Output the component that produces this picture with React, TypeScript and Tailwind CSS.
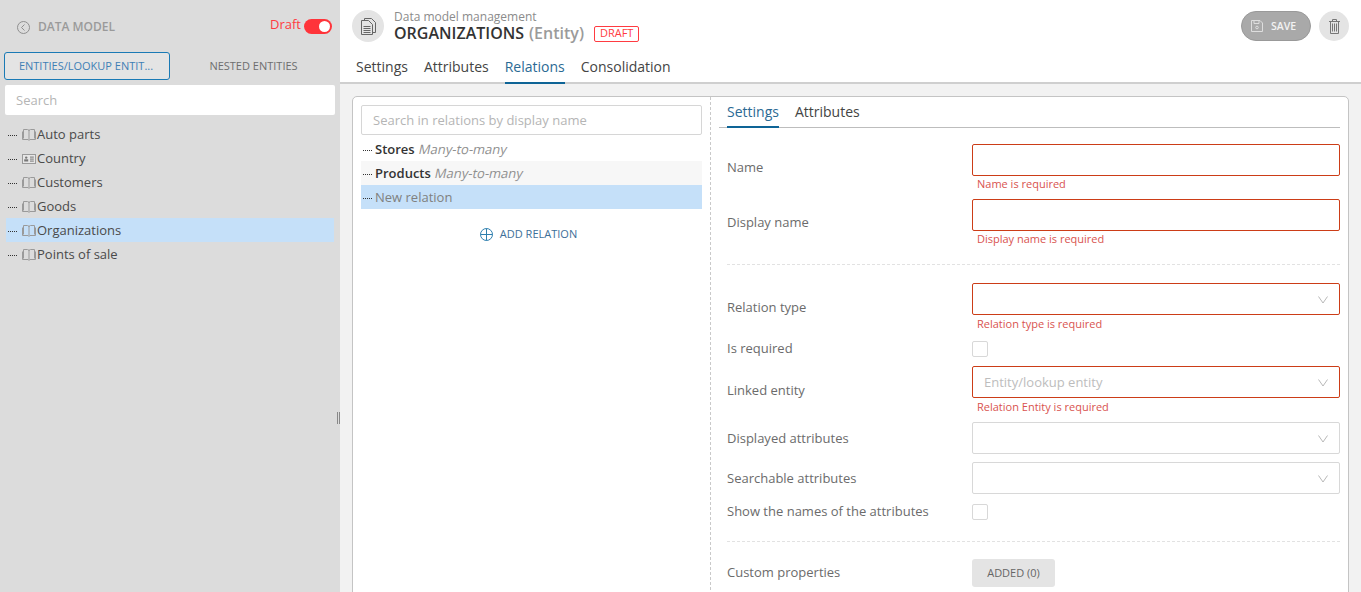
const font = "font-['Open_Sans',sans-serif]";

const BookIcon = () => (
  <svg width="14" height="12" viewBox="0 0 14 12" fill="none" stroke="#9a9a9a" strokeWidth="1" className="shrink-0">
    <path d="M1.5 0.5H5.5Q7 0.5 7 2V11M12.5 0.5H8.5Q7 0.5 7 2M1.5 0.5V9.5M12.5 0.5V9.5M0.5 2.5V10.5H6L7 11.5L8 10.5H13.5V2.5" />
  </svg>
);

const CardIcon = () => (
  <svg width="14" height="12" viewBox="0 0 14 12" className="shrink-0">
    <rect x="0.5" y="1.5" width="13" height="9" fill="#e6e6e6" stroke="#9a9a9a" />
    <circle cx="4.2" cy="4.6" r="1.2" fill="#777" />
    <rect x="2.2" y="6.3" width="4" height="2.2" fill="#777" />
    <rect x="8" y="3.5" width="3.8" height="1.2" fill="#888" />
    <rect x="8" y="5.5" width="3.8" height="1.2" fill="#888" />
    <rect x="8" y="7.5" width="3.8" height="1.2" fill="#888" />
  </svg>
);

const Chevron = () => (
  <svg width="10" height="8" viewBox="0 0 10 8" fill="none" stroke="#b8b8b8" strokeWidth="1" className="shrink-0">
    <path d="M0.5 0.5L5 7L9.5 0.5" />
  </svg>
);

const Dots = () => <span className="w-[9px] shrink-0 border-t border-dotted border-[#333]" />;

const treeItems = [
  { name: 'Auto parts', card: false },
  { name: 'Country', card: true },
  { name: 'Customers', card: false },
  { name: 'Goods', card: false },
  { name: 'Organizations', card: false, active: true },
  { name: 'Points of sale', card: false },
];

const Sidebar = () => (
  <aside className="relative flex w-[340px] shrink-0 flex-col bg-[#dcdcdc] pl-[4px] pr-[5px]">
    <div className="flex h-[52px] items-center justify-between pl-[13px] pr-[3px]">
      <div className="flex items-center gap-[8px] pt-[2px]">
        <svg width="13" height="13" viewBox="0 0 13 13" fill="none" stroke="#8f8f8f" strokeWidth="1">
          <circle cx="6.5" cy="6.5" r="6" />
          <path d="M7.5 3.5L4.5 6.5L7.5 9.5" />
        </svg>
        <span className="text-[12px] font-semibold text-[#9a9a9a]">DATA MODEL</span>
      </div>
      <div className="flex items-center gap-[3px]">
        <span className="mb-[3px] text-[13px] leading-none text-[#ff3b41]">Draft</span>
        <span className="flex h-[15px] w-[28px] items-center justify-end rounded-full bg-[#ff343a] pr-[2px]">
          <span className="size-[11px] rounded-full bg-white" />
        </span>
      </div>
    </div>
    <div className="flex h-[28px]">
      <div className="flex w-[166px] items-center justify-center rounded-[3px] border border-[#1a7ab5] bg-[#e4e4e4] pr-[2px] text-[11px] text-[#3f7fb5]">
        ENTITIES/LOOKUP ENTIT...
      </div>
      <div className="flex flex-1 items-center justify-center pl-[2px] text-[11px] text-[#6e6e6e]">NESTED ENTITIES</div>
    </div>
    <div className="mt-[5px] ml-[1px] flex h-[30px] items-center rounded-[2px] bg-white px-[11px] pt-[2px] text-[13px] text-[#b5b5b5]">
      Search
    </div>
    <div className="mt-[7px] mr-[1px] flex flex-col pl-[2px]">
      {treeItems.map((item) => (
        <div
          key={item.name}
          className={`flex h-[24px] items-center pl-[2px] pt-[2px] text-[13px] text-[#4a4a4a] ${item.active ? 'bg-[#c5e0f9]' : ''}`}
        >
          <Dots />
          <span className="ml-[5px] mr-[1px] flex">{item.card ? <CardIcon /> : <BookIcon />}</span>
          {item.name}
        </div>
      ))}
    </div>
    <div className="absolute top-[412px] right-0 h-[12px] w-[3px] border-x border-[#888]" />
  </aside>
);

const Header = () => (
  <header className="relative flex h-[84px] shrink-0 flex-col border-b-2 border-[#cfcfcf] bg-white">
    <div className="flex h-[52px] items-start justify-between pl-[12px] pr-[12px] pt-[10px]">
      <div className="flex items-start">
        <div className="flex size-[32px] items-center justify-center rounded-full bg-[#e4e4e4]">
          <svg width="15" height="17" viewBox="0 0 15 17" fill="none" stroke="#666" strokeWidth="1">
            <path d="M3.5 2.5V0.5H10.5L14.5 4.5V14.5H11.5" />
            <path d="M0.5 2.5H7.5L11.5 6.5V16.5H0.5Z" />
            <path d="M2.5 8.5H9.5M2.5 10.5H9.5M2.5 12.5H9.5M2.5 14.5H9.5" />
          </svg>
        </div>
        <div className="ml-[10px] flex flex-col">
          <span className="text-[12px] leading-[14px] text-[#8b8b8b]">Data model management</span>
          <div className="flex items-center">
            <span className="text-[16px] leading-[19px] font-semibold text-[#333]">ORGANIZATIONS</span>
            <span className="ml-[5px] text-[16px] leading-[19px] font-semibold text-[#9b9b9b]">(Entity)</span>
            <span className="ml-[10px] flex h-[16px] items-center rounded-[2px] border border-[#ff3b41] px-[5px] text-[11px] text-[#ff3b41]">
              DRAFT
            </span>
          </div>
        </div>
      </div>
      <div className="flex items-center gap-[8px] pt-[1px]">
        <div className="flex h-[30px] w-[70px] items-center gap-[8px] rounded-full border border-[#999] bg-[#a9a9a9] pl-[9px]">
          <svg width="12" height="12" viewBox="0 0 12 12" fill="none" stroke="#dedede" strokeWidth="1">
            <path d="M0.5 0.5H9L11.5 3V11.5H0.5Z" />
            <path d="M3 0.5V3.5H8V0.5" />
            <circle cx="6" cy="7.5" r="1.3" />
          </svg>
          <span className="pt-[2px] text-[10.5px] font-semibold text-[#f2f2f2]">SAVE</span>
        </div>
        <div className="flex size-[30px] items-center justify-center rounded-full bg-[#e4e4e4]">
          <svg width="11" height="15" viewBox="0 0 11 15" fill="none" stroke="#777" strokeWidth="1">
            <path d="M0 2.5H11M3.5 2.5V0.5H7.5V2.5M1.5 2.5V14.5H9.5V2.5M3.5 4.5V12.5M5.5 4.5V12.5M7.5 4.5V12.5" />
          </svg>
        </div>
      </div>
    </div>
    <nav className="flex h-[30px] gap-[16px] pl-[16px] text-[14px] text-[#444]">
      <span className="pt-[4px]">Settings</span>
      <span className="pt-[4px]">Attributes</span>
      <span className="-mb-[2px] border-b-2 border-[#0e6496] pt-[4px] text-[#2b6a94]">Relations</span>
      <span className="pt-[4px]">Consolidation</span>
    </nav>
  </header>
);

const RelationKind = () => (
  <span className="ml-[4px] inline-block -skew-x-12 text-[#8f8f8f]">Many-to-many</span>
);

const RelationsList = () => (
  <div className="w-[358px] shrink-0 border-r border-dashed border-[#c9c9c9] pt-[8px] pl-[8px] pr-[8px]">
    <div className="flex h-[30px] items-center rounded-[2px] border border-[#d6d6d6] px-[11px] pt-[2px] text-[13px] text-[#b5b5b5]">
      Search in relations by display name
    </div>
    <div className="mt-[2px] flex flex-col text-[13px]">
      <div className="flex h-[24px] items-center pl-[2px] pt-[2px]">
        <Dots />
        <span className="ml-[3px] font-semibold text-[#333]">Stores</span>
        <RelationKind />
      </div>
      <div className="flex h-[24px] items-center bg-[#f7f7f7] pl-[2px] pt-[2px]">
        <Dots />
        <span className="ml-[3px] font-semibold text-[#333]">Products</span>
        <RelationKind />
      </div>
      <div className="flex h-[24px] items-center bg-[#c5e0f9] pl-[2px] pt-[2px] text-[#808080]">
        <Dots />
        <span className="ml-[3px]">New relation</span>
      </div>
    </div>
    <div className="mt-[15px] flex h-[20px] items-center justify-center gap-[7px] pr-[6px] text-[11px] text-[#3d6f99]">
      <svg width="13" height="13" viewBox="0 0 13 13" fill="none" stroke="#2f7fae" strokeWidth="1">
        <circle cx="6.5" cy="6.5" r="6" />
        <path d="M6.5 0.5V12.5M0.5 6.5H12.5" />
      </svg>
      ADD RELATION
    </div>
  </div>
);

const Field = ({
  label,
  error,
  select,
  placeholder,
  invalid,
  className,
}: {
  label: string;
  error?: string;
  select?: boolean;
  placeholder?: string;
  invalid?: boolean;
  className?: string;
}) => (
  <div className={`flex items-center ${className ?? ''}`}>
    <span className={`w-[245px] shrink-0 text-[13px] text-[#6b6b6b] ${select ? 'pt-[2px]' : ''}`}>{label}</span>
    <div className="flex-1">
      <div
        className={`flex h-[32px] items-center justify-between rounded-[2px] border pl-[11px] pr-[11px] text-[13px] text-[#bdbdbd] ${
          invalid ? 'border-[#cc3d17]' : 'border-[#d8d8d8]'
        } ${select ? 'pt-[2px]' : ''}`}
      >
        <span>{placeholder}</span>
        {select && <Chevron />}
      </div>
      {error && (
        <div className={`ml-[5px] text-[11px] text-[#d9534f] ${select ? 'mt-[1px] h-[15px] leading-[16px]' : 'h-[16px] leading-[16px]'}`}>
          {error}
        </div>
      )}
    </div>
  </div>
);

const CheckRow = ({ label, className }: { label: string; className?: string }) => (
  <div className={`flex h-[16px] items-center ${className ?? ''}`}>
    <span className="mb-[1px] w-[245px] shrink-0 text-[13px] text-[#6b6b6b]">{label}</span>
    <span className="size-[16px] rounded-[2px] border border-[#d8d8d8]" />
  </div>
);

const FormPanel = () => (
  <div className="flex-1 pl-[8px] pr-[8px]">
    <div className="flex h-[31px] gap-[16px] border-b border-[#bdbdbd] pl-[8px] text-[14px] text-[#444]">
      <span className="-mb-px border-b-2 border-[#0e6496] pt-[4px] text-[#2b6a94]">Settings</span>
      <span className="pt-[4px]">Attributes</span>
    </div>
    <div className="pl-[8px]">
      <Field className="mt-[16px]" label="Name" error="Name is required" invalid />
      <Field className="mt-[7px]" label="Display name" error="Display name is required" invalid />
      <div className="mt-[17px] border-t border-dashed border-[#e2e2e2]" />
      <Field className="mt-[18px]" label="Relation type" error="Relation type is required" select invalid />
      <CheckRow className="mt-[10px]" label="Is required" />
      <Field
        className="mt-[9px]"
        label="Linked entity"
        error="Relation Entity is required"
        placeholder="Entity/lookup entity"
        select
        invalid
      />
      <Field className="mt-[8px]" label="Displayed attributes" select />
      <Field className="mt-[8px]" label="Searchable attributes" select />
      <CheckRow className="mt-[10px]" label="Show the names of the attributes" />
      <div className="mt-[21px] border-t border-dashed border-[#e2e2e2]" />
      <div className="mt-[17px] flex items-center">
        <span className="w-[245px] shrink-0 text-[13px] text-[#6b6b6b]">Custom properties</span>
        <span className="flex h-[28px] w-[83px] items-center justify-center rounded-[3px] bg-[#e4e4e4] text-[11px] text-[#666]">
          ADDED (0)
        </span>
      </div>
    </div>
  </div>
);

export default function App() {
  return (
    <div className={`flex h-[592px] w-[1361px] overflow-hidden ${font}`}>
      <Sidebar />
      <main className="flex min-w-0 flex-1 flex-col bg-[#f2f2f2]">
        <Header />
        <div className="flex-1 overflow-hidden px-[12px] pt-[12px]">
          <div className="flex h-[520px] rounded-t-[5px] border border-[#c4c4c4] bg-white">
            <RelationsList />
            <FormPanel />
          </div>
        </div>
      </main>
    </div>
  );
}
